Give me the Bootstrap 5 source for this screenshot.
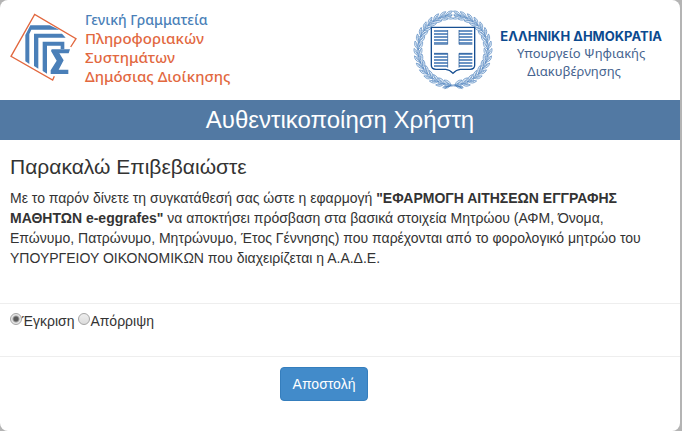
<!DOCTYPE html>
<html lang="el">
<head>
<meta charset="utf-8">
<meta name="viewport" content="width=device-width, initial-scale=1">
<title>Αυθεντικοποίηση Χρήστη</title>
<link rel="stylesheet" href="https://cdn.jsdelivr.net/npm/bootstrap@5.3.0/dist/css/bootstrap.min.css">
<style>
  body { background: #b4b4b4; color: #333; font: 14px/20px "Liberation Sans", Arial, sans-serif; padding-right: 2px; }
  .panel { border-radius: 8px; }
  .masthead { height: 100px; padding: 10px 18px 0 10px; }
  .gsis-mark { width: 70px; height: 72px; margin-top: 2px; }
  .gsis-name { font: 500 15px/19px "Noto Sans", sans-serif; color: #e2683f; margin-left: 5px; }
  .gsis-name .first { font-size: 14px; color: #4a7fb8; }
  .emblem { width: 80px; height: 80px; }
  .ministry { font: 13px/18px "Noto Sans", sans-serif; color: #46648f; margin: 18px 0 0 7px; }
  .ministry strong { display: block; font: 700 13px/16px Inter, sans-serif; color: #0c4a8f; }
  .ministry .unit { display: block; padding-right: 14px; }
  .title-bar { background: #5279a3; font-size: 24px; line-height: 40px; }
  .consent { padding: 16px 10px 35px; }
  .consent h2 { font-size: 21px; line-height: 22px; margin-bottom: 10px; }
  .choices { padding: 7px 10px 25px; border-top: 1px solid #eee; border-bottom: 1px solid #eee; }
  .choice-dot { appearance: none; width: 12px; height: 12px; margin: 0 0 6px; border: 1px solid #a5a5a5; border-radius: 50%; background: linear-gradient(#eee, #dcdcdc); vertical-align: middle; }
  .choice-dot:checked { background: radial-gradient(circle, #5a5a5a 0 2px, #e6e6e6 4px); }
  .btn-send { --bs-btn-color: #fff; --bs-btn-bg: #428bca; --bs-btn-border-color: #357ebd; --bs-btn-hover-color: #fff; --bs-btn-hover-bg: #3276b1; --bs-btn-padding-x: 12px; --bs-btn-padding-y: 6px; --bs-btn-font-size: 14px; --bs-btn-line-height: 20px; --bs-btn-border-radius: 4px; }
  .actions { padding: 10px; padding-right: 42px; }
</style>
</head>
<body>
<main class="panel bg-white min-vh-100 overflow-hidden">
  <header class="masthead d-flex justify-content-between align-items-start">
    <div class="d-flex">
      <svg class="gsis-mark" viewBox="30 38 210 216" aria-hidden="true">
        <path d="M212 143 L228 118 L104 45 L33 171 L158 242 L163 231" fill="none" stroke="#e2683f" stroke-width="4"/>
        <g fill="#4a7fb8">
          <path d="M76 186V107L91 78H149L178 91H94L88 104V194Z"/>
          <path d="M102 200V103H186L197 115H115V208Z"/>
          <path d="M128 215V127H193V150H182V139H141V223Z"/>
          <path d="M155 150H210L206 162H178L191 183L176 211H205V224H152V213L170 184L153 155Z"/>
        </g>
      </svg>
      <div class="gsis-name"><span class="first">Γενική Γραμματεία</span><br>Πληροφοριακών<br>Συστημάτων<br>Δημόσιας Διοίκησης</div>
    </div>
    <div class="d-flex">
      <svg class="emblem" viewBox="3 15 240 240" fill="none" stroke="#5a8bc2" stroke-width="2" aria-hidden="true">
        <defs>
          <g id="sprig">
            <path d="M104 11Q108 0 103-12"/>
            <path d="M105 8Q120 1 116-15Q105-8 105 8Z" fill="#e3edf7"/>
            <path d="M104 8Q90 2 93-14Q104-8 104 8Z" fill="#e3edf7"/>
            <path d="M107 3L113-8M102 2L97-8"/>
            <circle cx="105" cy="-10" r="2"/>
          </g>
          <g id="trio"><use href="#sprig"/><use href="#sprig" transform="rotate(-11)"/><use href="#sprig" transform="rotate(-22)"/></g>
          <g id="branch"><use href="#trio" transform="rotate(82)"/><use href="#trio" transform="rotate(49)"/><use href="#trio" transform="rotate(16)"/><use href="#trio" transform="rotate(-17)"/><use href="#trio" transform="rotate(-50)"/><use href="#sprig" transform="rotate(-82)"/></g>
        </defs>
        <use href="#branch" transform="translate(123 135)"/>
        <use href="#branch" transform="translate(123 135) scale(-1 1)"/>
        <path d="M98 251Q124 228 151 251M96 246Q124 239 152 246" stroke="#3f76b5"/>
        <path d="M58 67H188V181Q188 193 174 193H145Q133 194 123 205Q113 194 101 193H72Q58 193 58 181Z" fill="#fff" stroke="#174f92" stroke-width="4"/>
        <path d="M66 78H107M66 87H107M66 96H107M66 105H107M66 114H107M141 78H181M141 87H181M141 96H181M141 105H181M141 114H181M66 147H107M66 156H107M66 165H107M66 174H107M66 183H107M141 147H181M141 156H181M141 165H181M141 174H181M141 183H181" stroke="#3c73b2" stroke-width="4"/>
        <path d="M107 75V118M141 75V118M107 145V188M141 145V188M66 118H107M141 118H181M66 145H107M141 145H181" stroke="#174f92"/>
      </svg>
      <div class="ministry text-center"><strong>ΕΛΛΗΝΙΚΗ ΔΗΜΟΚΡΑΤΙΑ</strong>Υπουργείο Ψηφιακής<span class="unit">Διακυβέρνησης</span></div>
    </div>
  </header>
  <h1 class="title-bar text-white text-center fw-normal m-0">Αυθεντικοποίηση Χρήστη</h1>
  <form>
    <section class="consent">
      <h2 class="fw-normal">Παρακαλώ Επιβεβαιώστε</h2>
      <p class="m-0">Με το παρόν δίνετε τη συγκατάθεσή σας ώστε η εφαρμογή <strong>"ΕΦΑΡΜΟΓΗ ΑΙΤΗΣΕΩΝ ΕΓΓΡΑΦΗΣ ΜΑΘΗΤΩΝ e-eggrafes"</strong> να αποκτήσει πρόσβαση στα βασικά στοιχεία Μητρώου (ΑΦΜ, Όνομα, Επώνυμο, Πατρώνυμο, Μητρώνυμο, Έτος Γέννησης) που παρέχονται από το φορολογικό μητρώο του ΥΠΟΥΡΓΕΙΟΥ ΟΙΚΟΝΟΜΙΚΩΝ που διαχειρίζεται η Α.Α.Δ.Ε.</p>
    </section>
    <div class="choices">
      <input class="choice-dot" type="radio" name="consent" id="approve" checked><label for="approve">Έγκριση</label>
      <input class="choice-dot" type="radio" name="consent" id="reject"><label for="reject">Απόρριψη</label>
    </div>
    <div class="actions text-center"><button type="submit" class="btn btn-send">Αποστολή</button></div>
  </form>
</main>
<script src="https://cdn.jsdelivr.net/npm/bootstrap@5.3.0/dist/js/bootstrap.bundle.min.js"></script>
</body>
</html>
